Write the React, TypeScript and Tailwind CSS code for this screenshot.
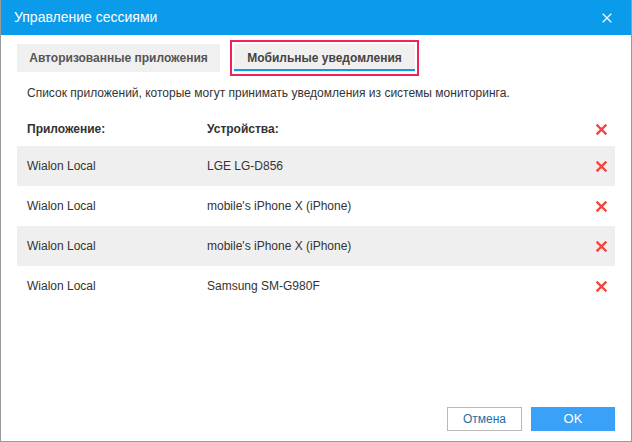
import { X } from "lucide-react";

const rows = [
  { app: "Wialon Local", device: "LGE LG-D856" },
  { app: "Wialon Local", device: "mobile's iPhone X (iPhone)" },
  { app: "Wialon Local", device: "mobile's iPhone X (iPhone)" },
  { app: "Wialon Local", device: "Samsung SM-G980F" },
];

function RedX() {
  return (
    <svg width="11" height="11" viewBox="0 0 11 11" className="shrink-0">
      <path d="M1.5 1.5l8 8M9.5 1.5l-8 8" stroke="#f2453d" strokeWidth="2.4" strokeLinecap="square" />
    </svg>
  );
}

export default function App() {
  return (
    <div
      className="w-[632px] h-[442px] flex flex-col bg-white border border-t-0 border-[#9a9a9a] text-[#333]"
      style={{ fontFamily: '"Liberation Sans", Arial, sans-serif' }}
    >
      {/* Header */}
      <div className="h-[35px] shrink-0 bg-[#0a9bea] flex items-center justify-between pl-[13px] pr-[16px]">
        <span className="text-white text-[14px]">Управление сессиями</span>
        <X size={16} strokeWidth={1.75} className="text-white" />
      </div>

      {/* Tabs */}
      <div className="flex items-center px-[16px] mt-[9px] gap-[10px]">
        <div className="h-[28px] w-[203px] bg-[#f0f0f0] flex items-center justify-center text-[12px] font-bold text-[#555]">
          Авторизованные приложения
        </div>
        <div className="-my-[4px] border-2 border-[#f0245a] p-[2px]">
          <div className="relative h-[28px] w-[181px] bg-[#f0f0f0] flex items-center justify-center text-[12px] font-bold text-[#444]">
            Мобильные уведомления
            <div className="absolute left-0 right-0 bottom-[1px] h-[2px] bg-[#0a9bea]" />
          </div>
        </div>
      </div>

      <p className="px-[26px] mt-[12px] text-[12px] text-[#333]">
        Список приложений, которые могут принимать уведомления из системы мониторинга.
      </p>

      {/* Table */}
      <div className="mx-[16px] mt-[10px]">
        <div className="h-[34px] flex items-center pl-[10px] pr-[8px] text-[12px] font-bold text-[#333]">
          <span className="w-[180px]">Приложение:</span>
          <span className="flex-1">Устройства:</span>
          <RedX />
        </div>
        {rows.map((r, i) => (
          <div
            key={i}
            className={`h-[40px] flex items-center pl-[10px] pr-[8px] text-[12px] text-[#333] ${i % 2 === 0 ? "bg-[#efefef]" : "bg-white"}`}
          >
            <span className="w-[180px]">{r.app}</span>
            <span className="flex-1">{r.device}</span>
            <RedX />
          </div>
        ))}
      </div>

      {/* Footer */}
      <div className="mt-auto flex justify-end gap-[9px] px-[16px] pb-[10px]">
        <button className="h-[24px] w-[75px] border border-[#b8b8b8] bg-white text-[12px] text-[#1e6fa6]">
          Отмена
        </button>
        <button className="h-[24px] w-[84px] bg-[#3aa1f8] text-[13px] text-white">OK</button>
      </div>
    </div>
  );
}
